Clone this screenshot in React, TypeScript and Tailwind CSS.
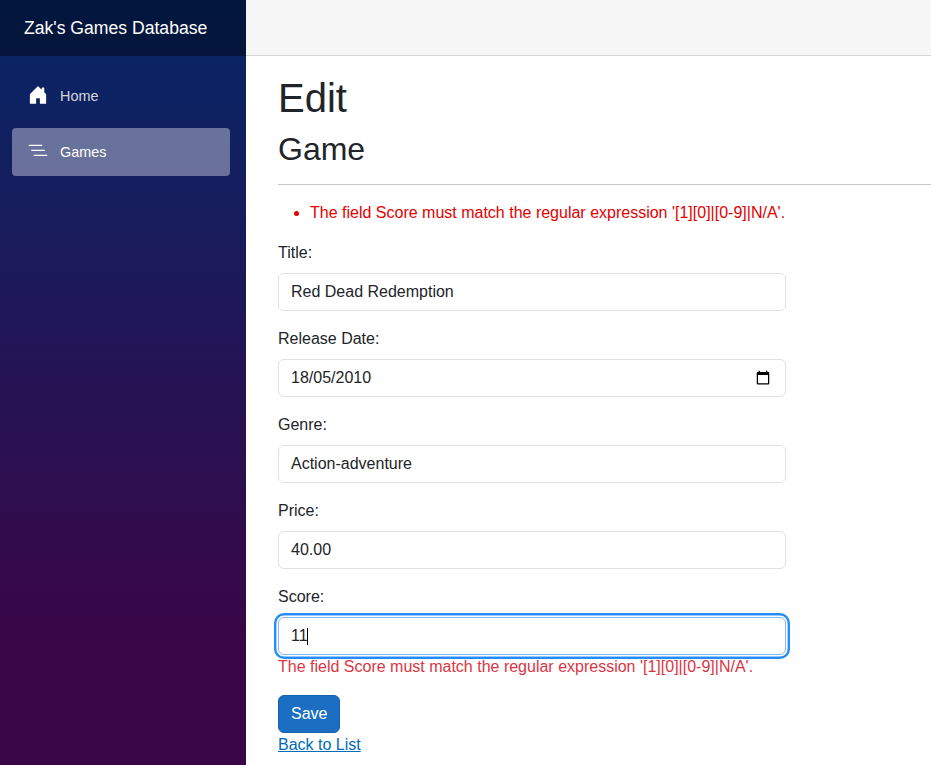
import type { ReactNode } from "react";

const ERROR_TEXT = "The field Score must match the regular expression '[1][0]|[0-9]|N/A'.";

function HomeIcon() {
  return (
    <svg width="20" height="20" viewBox="0 0 16 16" fill="white">
      <path d="M6.5 14.5v-3.505c0-.245.25-.495.5-.495h2c.25 0 .5.25.5.5v3.5a.5.5 0 0 0 .5.5h4a.5.5 0 0 0 .5-.5v-7a.5.5 0 0 0-.146-.354L13 5.793V2.5a.5.5 0 0 0-.5-.5h-1a.5.5 0 0 0-.5.5v1.293L8.354 1.146a.5.5 0 0 0-.708 0l-6 6A.5.5 0 0 0 1.500 7.5v7a.5.5 0 0 0 .5.5h4a.5.5 0 0 0 .5-.5Z" />
    </svg>
  );
}

function ListNestedIcon() {
  return (
    <svg width="20" height="20" viewBox="0 0 16 16" fill="white">
      <path
        fillRule="evenodd"
        d="M4.5 11.5A.5.5 0 0 1 5 11h10a.5.5 0 0 1 0 1H5a.5.5 0 0 1-.5-.5zm-2-4A.5.5 0 0 1 3 7h10a.5.5 0 0 1 0 1H3a.5.5 0 0 1-.5-.5zm-2-4A.5.5 0 0 1 1 3h10a.5.5 0 0 1 0 1H1a.5.5 0 0 1-.5-.5z"
      />
    </svg>
  );
}

function CalendarIcon() {
  return (
    <svg width="16" height="15" viewBox="0 0 24 24" fill="black">
      <path d="M20 3h-1V1h-2v2H7V1H5v2H4c-1.1 0-2 .9-2 2v16c0 1.100.9 2 2 2h16c1.100 0 2-.9 2-2V5c0-1.100-.9-2-2-2zm0 18H4V8h16v13z" />
    </svg>
  );
}

function NavItem({ icon, label, active }: { icon: ReactNode; label: string; active?: boolean }) {
  return (
    <a
      className={`flex h-12 items-center rounded px-4 text-[14.4px] ${
        active ? "bg-white/[0.37] text-white" : "text-[#d7d7d7]"
      }`}
    >
      <span className="mr-3 -mt-0.5">{icon}</span>
      <span className="pt-0.5">{label}</span>
    </a>
  );
}

function Field({
  label,
  value,
  focused,
  icon,
  error,
}: {
  label: string;
  value: string;
  focused?: boolean;
  icon?: ReactNode;
  error?: string;
}) {
  return (
    <div className="mb-4">
      <div className="mb-2">{label}</div>
      <div
        className={`flex h-[38px] items-center justify-between rounded-md border bg-white px-3 ${
          focused
            ? "border-[#86b7fe] shadow-[0_0_0_1.6px_white,0_0_0_4px_#258cfb]"
            : "border-[#dee2e6]"
        }`}
      >
        <span className="flex items-center">
          {value}
          {focused && <span className="-ml-px h-[17px] w-px bg-black" />}
        </span>
        {icon}
      </div>
      {error && <div className="whitespace-nowrap text-[#dc3545]">{error}</div>}
    </div>
  );
}

export default function App() {
  return (
    <div className="flex h-[765px] w-[931px] overflow-hidden bg-white font-['Liberation_Sans',Arial,sans-serif] text-base text-[#212529]">
      <aside className="w-[246px] shrink-0 bg-[linear-gradient(180deg,rgb(5,39,103)_0%,#3a0647_84%)]">
        <div className="flex h-14 items-center bg-black/40 pl-6 text-[17.6px] text-white">
          Zak's Games Database
        </div>
        <nav className="flex flex-col gap-2 pt-4 pr-4 pl-3">
          <NavItem icon={<HomeIcon />} label="Home" />
          <NavItem icon={<ListNestedIcon />} label="Games" active />
        </nav>
      </aside>

      <main className="min-w-0 flex-1">
        <div className="h-14 border-b border-[#d6d5d5] bg-[#f7f7f7]" />
        <article className="pt-[17.6px] pl-8">
          <h1 className="mb-2 text-[40px] leading-[48px]">Edit</h1>
          <h2 className="text-[32px] leading-[38.4px]">Game</h2>
          <hr className="my-4 border-[#c8c9ca]" />
          <ul className="mb-4 list-disc pl-8 text-[#e50000]">
            <li>{ERROR_TEXT}</li>
          </ul>
          <form className="w-[508px]">
            <Field label="Title:" value="Red Dead Redemption" />
            <Field
              label="Release Date:"
              value="18/05/2010"
              icon={<span className="mr-0.5 mb-0.5"><CalendarIcon /></span>}
            />
            <Field label="Genre:" value="Action-adventure" />
            <Field label="Price:" value="40.00" />
            <Field label="Score:" value="11" focused error={ERROR_TEXT} />
            <button
              type="button"
              className="block h-[38px] rounded-md border border-[#1861ac] bg-[#1b6ec2] px-3 text-white"
            >
              Save
            </button>
          </form>
          <a className="text-[#006bb7] underline">Back to List</a>
        </article>
      </main>
    </div>
  );
}
